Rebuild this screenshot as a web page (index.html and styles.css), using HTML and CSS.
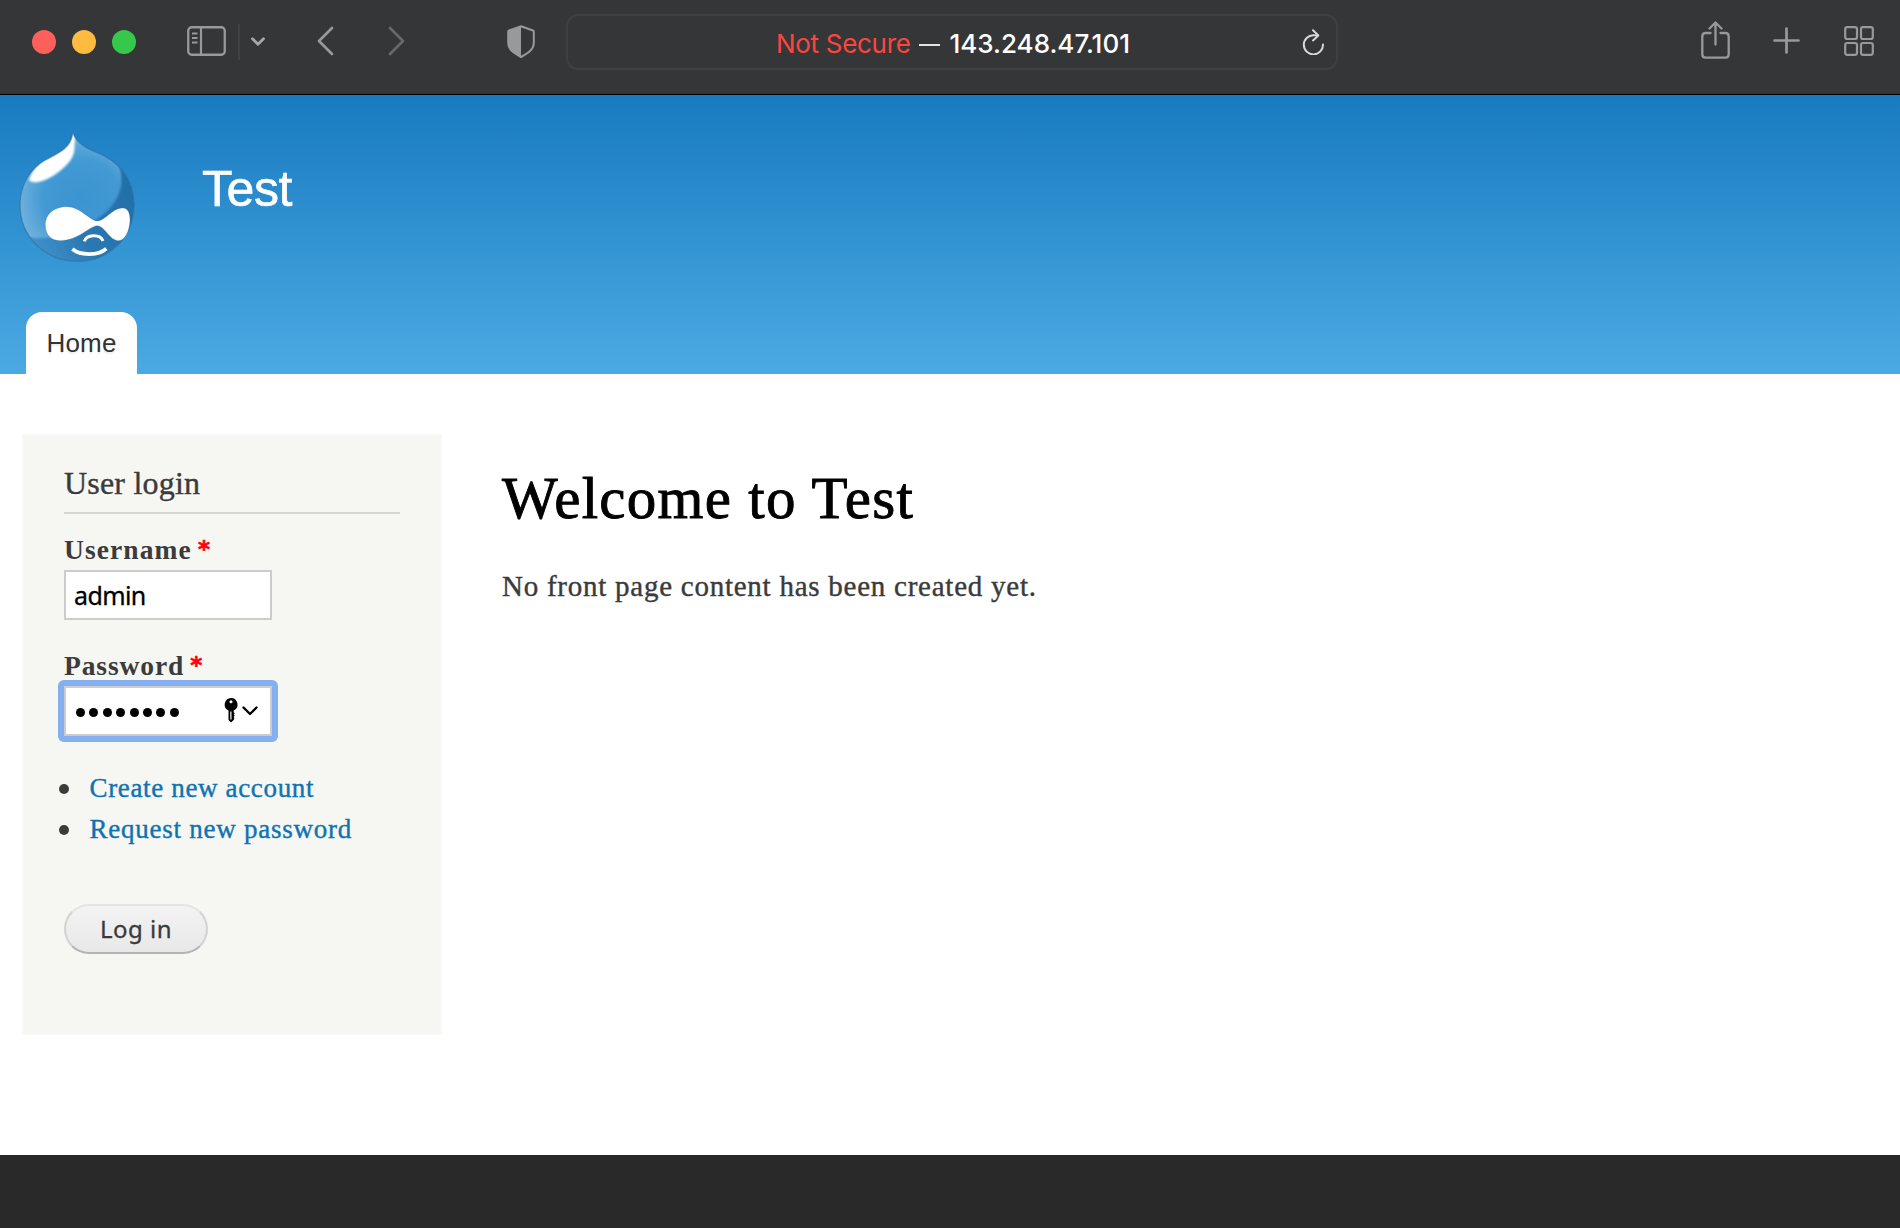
FILE: index.html
```html
<!DOCTYPE html>
<html lang="en">
<head>
<meta charset="utf-8">
<title>Welcome to Test | Test</title>
<link rel="stylesheet" href="styles.css">
</head>
<body>
<div class="toolbar">
  <div class="lights"><span class="light red"></span><span class="light yellow"></span><span class="light green"></span></div>
  <svg class="ico-sidebar" width="39" height="30" viewBox="0 0 39 30" fill="none" stroke="#98999b"><rect x="1.25" y="1.25" width="36.5" height="27.5" rx="3.5" stroke-width="2.3"/><path d="M14 1v28" stroke-width="2.2"/><path d="M5 7.5h5.500M5 12h5.500M5 16.500h5.500" stroke-width="1.800"/></svg>
  <span class="divider"></span>
  <svg class="ico-down" width="14" height="10" viewBox="0 0 14 10" fill="none" stroke="#a5a6a8" stroke-width="2.800" stroke-linecap="round" stroke-linejoin="round"><path d="M1.500 1.700 7 7.300l5.500-5.600"/></svg>
  <svg class="ico-back" width="17" height="30" viewBox="0 0 17 30" fill="none" stroke="#98999b" stroke-width="2.700" stroke-linecap="round" stroke-linejoin="round"><path d="M15 2 2 15l13 13"/></svg>
  <svg class="ico-forward" width="17" height="30" viewBox="0 0 17 30" fill="none" stroke="#68696b" stroke-width="2.700" stroke-linecap="round" stroke-linejoin="round"><path d="m2 2 13 13L2 28"/></svg>
  <svg class="ico-shield" width="28" height="33" viewBox="0 0 28 33"><path d="M14 1.200 26 5.500q.8.300.8 1.200V18c0 6-4.500 9.500-12.800 14C5.700 27.500 1.200 24 1.200 18V6.700q0-.9.8-1.200z" fill="none" stroke="#98999b" stroke-width="2"/><path d="M14 1.200v30.800C5.700 27.500 1.200 24 1.200 18V6.700q0-.9.8-1.200z" fill="#98999b"/></svg>
  <div class="address">
    <span class="address-text"><span class="warn">Not Secure</span><span class="dash"></span><span class="host">143.248.47.101</span></span>
    <svg class="ico-reload" width="23" height="26" viewBox="0 0 23 26" fill="none" stroke="#d8d8d9" stroke-width="2" stroke-linecap="round" stroke-linejoin="round"><path d="M15.500 6.200H11.500A9.600 9.600 0 1 0 21 15.500"/><path d="M11 1.200 16.300 6.400 11 11.400"/></svg>
  </div>
  <svg class="ico-share" width="29" height="38" viewBox="0 0 29 38" fill="none" stroke="#98999b" stroke-width="2.300" stroke-linecap="round" stroke-linejoin="round"><path d="M9.500 12H4.700Q1.300 12 1.300 15.400V33.300Q1.300 36.700 4.700 36.700H24.300Q27.700 36.700 27.700 33.300V15.400Q27.700 12 24.300 12H19.500"/><path d="M14.500 23.500V1.800M8.500 7.500l6-6 6 6"/></svg>
  <svg class="ico-plus" width="27" height="27" viewBox="0 0 27 27" stroke="#98999b" stroke-width="2.700" stroke-linecap="round"><path d="M13.500 1.500v24M1.500 13.500h24"/></svg>
  <svg class="ico-grid" width="30" height="30" viewBox="0 0 30 30" fill="none" stroke="#98999b" stroke-width="2.200"><rect x="1.200" y="1.200" width="11.800" height="11.800" rx="2"/><rect x="17" y="1.200" width="11.800" height="11.800" rx="2"/><rect x="1.200" y="17" width="11.800" height="11.800" rx="2"/><rect x="17" y="17" width="11.800" height="11.800" rx="2"/></svg>
</div>
<header class="header">
  <div class="brand">
    <svg class="logo" width="140" height="145" viewBox="0 0 420 435">
      <defs>
        <radialGradient id="drop" gradientUnits="userSpaceOnUse" cx="215" cy="220" r="190"><stop offset="0" stop-color="#3b93d0"/><stop offset=".6" stop-color="#4299d3"/><stop offset="1" stop-color="#6fb1dd"/></radialGradient>
        <linearGradient id="shade" gradientUnits="userSpaceOnUse" x1="350" y1="190" x2="90" y2="370"><stop offset="0" stop-color="#2470aa"/><stop offset=".6" stop-color="#2a78b2"/><stop offset="1" stop-color="#3d8fc9"/></linearGradient>
        <clipPath id="dropclip"><path d="M188 22C197 48 222 68 255 80C330 108 372 165 372 238C372 335 300 409 202 409C105 409 30 335 30 240C30 175 65 128 105 105C150 82 186 66 188 22Z"/></clipPath>
        <filter id="soft" x="-10%" y="-10%" width="120%" height="120%"><feGaussianBlur stdDeviation="3"/></filter>
      </defs>
      <g clip-path="url(#dropclip)">
        <path d="M0 0h420v435H0z" fill="url(#drop)"/>
        <path d="M325 115C350 185 322 240 262 282C200 325 130 350 40 335L100 430H400V160Z" fill="url(#shade)" filter="url(#soft)"/>
        <path d="M184 18C182 66 140 84 105 105C78 121 62 145 57 166C72 180 112 167 147 140C177 117 192 97 193 72L196 30Z" fill="#fff" filter="url(#soft)"/>
      </g>
      <path d="M188 22C197 48 222 68 255 80C330 108 372 165 372 238C372 335 300 409 202 409C105 409 30 335 30 240C30 175 65 128 105 105C150 82 186 66 188 22Z" fill="none" stroke="#2c6c9c" stroke-opacity=".6" stroke-width="4"/>
      <path d="M106 300C106 265 135 245 170 245C212 245 240 288 262 288C285 288 305 251 336 249C355 248 360 265 360 287C358 320 344 347 325 347C300 347 283 302 262 302C240 302 205 347 150 347C122 347 106 328 106 300Z" fill="#fff" stroke="#28688f" stroke-opacity=".4" stroke-width="2"/>
      <path d="M223 349C229 328 271 325 279 348" fill="none" stroke="#fff" stroke-width="9"/>
      <path d="M187 372C210 392 265 393 289 371" fill="none" stroke="#fff" stroke-width="11"/>
    </svg>
    <span class="site-name">Test</span>
  </div>
  <nav class="tabs"><a class="tab">Home</a></nav>
</header>
<main class="main">
  <aside class="sidebar">
    <h2 class="block-title"><span>User login</span></h2>
    <form class="login">
      <label class="label"><span class="username-label">Username</span> <span class="required">*</span></label>
      <div class="field"><span class="field-text">admin</span></div>
      <label class="label second"><span class="password-label">Password</span> <span class="required">*</span></label>
      <div class="field focused">
        <span class="dots"><i></i><i></i><i></i><i></i><i></i><i></i><i></i><i></i></span>
        <svg class="ico-key" width="34" height="26" viewBox="0 0 34 26"><path fill-rule="evenodd" d="M7 0a6.500 6.500 0 0 1 2.700 12.400v1.800l1 1-1 1.300 1 1.300-1 1.300.7 1.200-.7 1.700L7 24.500l-2.500-2.500v-9.600A6.500 6.500 0 0 1 7 0zm0 2.200a1.500 1.500 0 1 0 0 3.100 1.500 1.500 0 0 0 0-3.100zM6.300 13.500v8h1.200v-8z"/><path d="m19.500 9.500 6.500 6.500 6.500-6.500" fill="none" stroke="#000" stroke-width="2.400" stroke-linecap="round" stroke-linejoin="round"/></svg>
      </div>
      <ul class="links"><li><a class="link-create">Create new account</a></li><li><a class="link-request">Request new password</a></li></ul>
      <div class="button"><span class="button-text">Log in</span></div>
    </form>
  </aside>
  <section class="content">
    <h1 class="page-title"><span>Welcome to Test</span></h1>
    <p class="message"><span>No front page content has been created yet.</span></p>
  </section>
</main>
<footer class="footer"></footer>
</body>
</html>
```
FILE: styles.css
```css
* { box-sizing: border-box; }
body { margin: 0; height: 1228px; overflow: hidden; display: flex; flex-direction: column; background: #fff; font-family: "Liberation Serif", serif; color: #3b3b3b; }
svg { display: block; flex: none; }
.toolbar { height: 95px; flex: none; background: #353638; border-bottom: 1px solid #000; display: flex; align-items: flex-start; padding-left: 32px; }
.lights { display: flex; gap: 16px; margin-top: 30px; }
.light { width: 24px; height: 24px; border-radius: 50%; }
.red { background: #fe5f5b; }
.yellow { background: #fdbb40; }
.green { background: #35c84a; }
.ico-sidebar { margin: 26px 0 0 51px; }
.divider { width: 2px; height: 36px; margin: 24px 0 0 12px; background: #414244; }
.ico-down { margin: 37px 0 0 11px; }
.ico-back { margin: 26px 0 0 52px; }
.ico-forward { margin: 26px 0 0 54px; }
.ico-shield { margin: 25px 0 0 102px; }
.address { width: 772px; height: 56px; margin: 14px 0 0 31px; border: 2px solid #3f4042; border-radius: 12px; display: flex; align-items: center; font: 26px/30px Inter, sans-serif; }
.address-text { display: flex; align-items: center; margin: 3px 0 0 208px; width: 356px; white-space: nowrap; }
.warn { width: 143px; color: #fd453f; letter-spacing: -.3px; }
.dash { width: 21px; height: 2px; margin: 3px 9.500px 0 0; background: #e3e3e3; }
.host { color: #fff; font-weight: 500; }
.ico-reload { margin-left: 170px; }
.ico-share { margin: 21px 0 0 363px; }
.ico-plus { margin: 27px 0 0 43px; }
.ico-grid { margin: 26px 0 0 44px; }
.header { height: 279px; flex: none; background: linear-gradient(#187bc0, #4baae3); display: flex; flex-direction: column; justify-content: space-between; font-family: "Liberation Sans", sans-serif; }
.brand { display: flex; padding: 30px 0 0 10px; }
.site-name { margin: 35px 0 0 52px; font-size: 50px; line-height: 58px; letter-spacing: -.4px; color: #fff; -webkit-text-stroke: .6px #fff; }
.tabs { display: flex; padding-left: 26px; }
.tab { width: 111px; height: 62px; border-radius: 16px 16px 0 0; background: #fff; text-align: center; font-size: 26px; line-height: 63px; letter-spacing: .2px; color: #333; text-shadow: 0 2px 1px #eee; }
.main { height: 781px; flex: none; display: flex; align-items: flex-start; padding: 60px 0 0 22px; }
.sidebar { width: 420px; height: 601px; background: #f6f6f2; border: 2px solid #f9f9f9; padding: 28px 40px 0; }
.block-title { margin: 0; height: 50px; border-bottom: 2px solid #d6d6d6; font-size: 32px; font-weight: 400; line-height: 38px; letter-spacing: .2px; text-shadow: 0 2px 1px #fff; -webkit-text-stroke: .4px #3b3b3b; }
.label { display: flex; gap: 6px; margin-top: 22px; height: 34px; font-size: 27.500px; line-height: 27px; font-weight: 700; letter-spacing: 1.100px; }
.password-label { letter-spacing: .9px; }
.label.second { margin-top: 32px; }
.required { color: #f01; font-family: "DejaVu Sans", sans-serif; font-size: 23px; letter-spacing: 0; -webkit-text-stroke: .6px #f01; }
.field { width: 208px; height: 50px; border: 2px solid #ccc; background: #fff; color: #000; padding-left: 8px; display: flex; align-items: center; font: 25px/30px "Noto Sans", sans-serif; }
.field-text { letter-spacing: -.6px; margin-top: -1px; -webkit-text-stroke: .3px #000; }
.focused { position: relative; }
.focused::after { content: ""; position: absolute; inset: -8px; border: 6px solid #84aff1; border-radius: 6px; }
.dots { display: flex; gap: 4.400px; margin: 3px 0 0 2px; }
.dots i { width: 9px; height: 9px; border-radius: 50%; background: #000; }
.ico-key { margin-left: 45.500px; }
.links { margin: 32px 0 0; padding: 0 0 0 25.500px; list-style: none; font-size: 27px; line-height: 41px; letter-spacing: .65px; color: #0f73b3; -webkit-text-stroke: .4px #0f73b3; }
.link-request { letter-spacing: .75px; }
.links li { display: flex; align-items: center; }
.links li::before { content: ""; width: 10px; height: 10px; border-radius: 50%; background: #3b3b3b; margin: 0 21px 0 -31px; }
.button { width: 144px; height: 50px; margin-top: 54px; border: 2px solid; border-color: #e4e4e4 #d2d2d2 #b4b4b4; border-radius: 25px; background: linear-gradient(#f3f3f3, #e8e8e8); text-align: center; font: 24px/46px "Noto Sans", sans-serif; letter-spacing: .5px; color: #3a3a3a; -webkit-text-stroke: .3px #3a3a3a; }
.content { padding: 31px 0 0 60px; white-space: nowrap; }
.page-title { margin: 0; font-size: 59px; font-weight: 400; line-height: 66px; letter-spacing: 1.270px; color: #000; -webkit-text-stroke: .9px #000; }
.message { margin: 38px 0 0; font-size: 29px; line-height: 34px; letter-spacing: .75px; -webkit-text-stroke: .4px #3b3b3b; }
.footer { flex: 1; background: #292929; }
```
